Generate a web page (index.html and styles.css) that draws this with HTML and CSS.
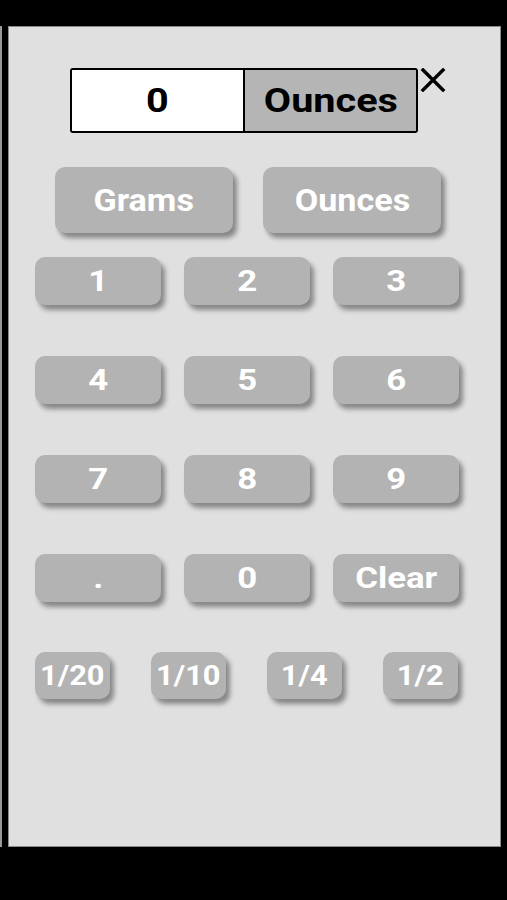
FILE: index.html
```html
<!DOCTYPE html>
<html>
<head>
<meta charset="utf-8">
<link rel="stylesheet" href="styles.css">
</head>
<body>
<div class="screen">
  <div class="strip"></div>
  <div class="panel">
    <div class="display-row">
      <div class="display">
        <div class="value"><span class="txt">0</span></div>
        <div class="unit"><span class="txt">Ounces</span></div>
      </div>
      <svg class="close" width="26" height="24" viewBox="0 0 26 24">
        <path d="M3 2 L23 22 M23 2 L3 22" stroke="#000" stroke-width="3.4" stroke-linecap="square" fill="none"/>
      </svg>
    </div>
    <div class="units">
      <div class="btn unit-btn"><span class="txt">Grams</span></div>
      <div class="btn unit-btn"><span class="txt">Ounces</span></div>
    </div>
    <div class="keys">
      <div class="btn key"><span class="txt">1</span></div>
      <div class="btn key"><span class="txt">2</span></div>
      <div class="btn key"><span class="txt">3</span></div>
      <div class="btn key"><span class="txt">4</span></div>
      <div class="btn key"><span class="txt">5</span></div>
      <div class="btn key"><span class="txt">6</span></div>
      <div class="btn key"><span class="txt">7</span></div>
      <div class="btn key"><span class="txt">8</span></div>
      <div class="btn key"><span class="txt">9</span></div>
      <div class="btn key"><span class="txt">.</span></div>
      <div class="btn key"><span class="txt">0</span></div>
      <div class="btn key"><span class="txt">Clear</span></div>
    </div>
    <div class="fractions">
      <div class="btn frac"><span class="txt">1/20</span></div>
      <div class="btn frac"><span class="txt">1/10</span></div>
      <div class="btn frac"><span class="txt">1/4</span></div>
      <div class="btn frac"><span class="txt">1/2</span></div>
    </div>
  </div>
</div>
</body>
</html>
```

FILE: styles.css
```css
html, body {
  margin: 0;
  padding: 0;
  background: #000;
}
body {
  width: 507px;
  height: 900px;
  font-family: Roboto, "Liberation Sans", sans-serif;
}
.screen {
  display: flex;
  gap: 6px;
  padding-top: 26px;
}
.strip {
  width: 2px;
  height: 821px;
  background: #9a9a9a;
}
.panel {
  box-sizing: border-box;
  width: 493px;
  height: 821px;
  background: #e0e0e0;
  border: 1px solid #8a8a8a;
  padding-left: 26px;
  display: flex;
  flex-direction: column;
}
.txt {
  display: inline-block;
}
.display-row {
  display: flex;
  align-items: flex-start;
  margin-top: 41px;
  margin-left: 35px;
}
.display {
  box-sizing: border-box;
  width: 348px;
  height: 65px;
  border: 2px solid #000;
  border-radius: 3px;
  display: flex;
  overflow: hidden;
}
.value {
  width: 171px;
  background: #fff;
  border-right: 2px solid #000;
  display: flex;
  align-items: center;
  justify-content: center;
  font-weight: bold;
  font-size: 33px;
  color: #000;
}
.unit {
  flex: 1;
  background: #b5b5b5;
  display: flex;
  align-items: center;
  justify-content: center;
  font-weight: bold;
  font-size: 33px;
  color: #000;
}
.value .txt,
.unit .txt {
  transform: scaleX(1.2);
}
.close {
  margin-left: 2px;
  margin-top: 0;
}
.btn {
  background: #b3b3b3;
  color: #fff;
  font-weight: bold;
  display: flex;
  align-items: center;
  justify-content: center;
  border-radius: 10px;
  box-shadow: 4px 5px 5px rgba(0, 0, 0, 0.4);
}
.units {
  display: flex;
  gap: 30px;
  margin-top: 34px;
  margin-left: 20px;
}
.unit-btn {
  width: 178px;
  height: 66px;
  font-size: 31px;
}
.unit-btn .txt {
  transform: scaleX(1.1);
}
.keys {
  display: grid;
  grid-template-columns: repeat(3, 126px);
  grid-auto-rows: 48px;
  column-gap: 23px;
  row-gap: 51px;
  margin-top: 24px;
}
.key {
  font-size: 29px;
}
.key .txt {
  transform: scaleX(1.2);
}
.frac {
  width: 75px;
  height: 47px;
  font-size: 28px;
}
.frac .txt {
  transform: scaleX(1.1);
}
.fractions {
  display: flex;
  gap: 41px;
  margin-top: 50px;
}
```
